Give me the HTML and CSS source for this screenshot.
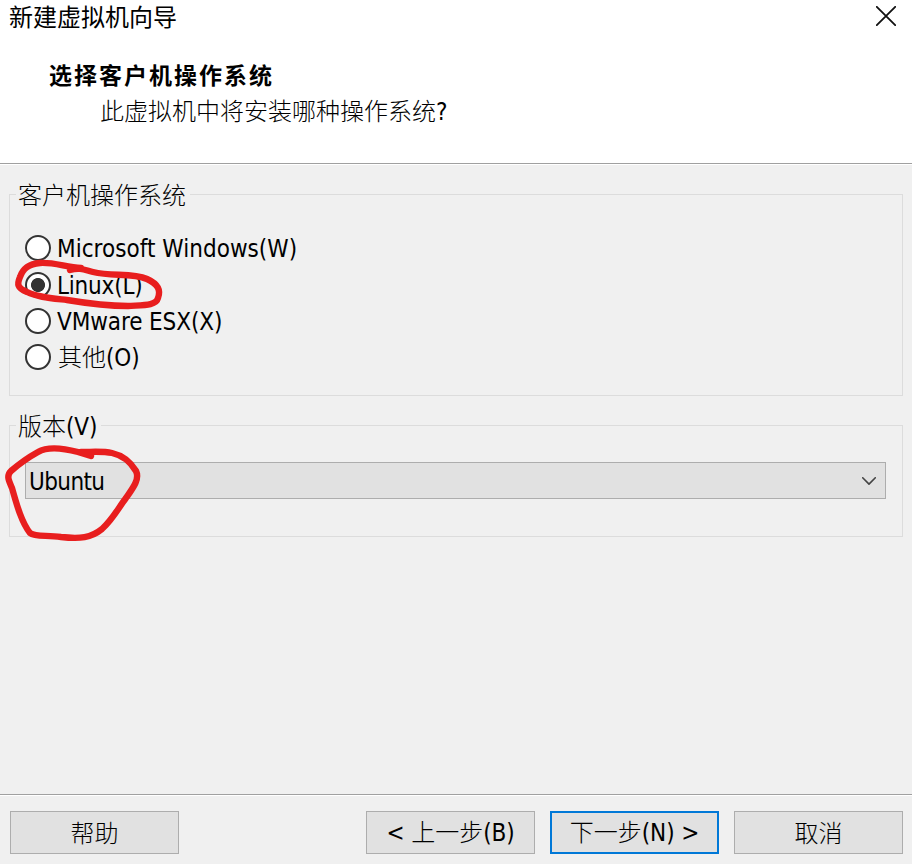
FILE: index.html
```html
<!DOCTYPE html>
<html lang="zh-CN">
<head>
<meta charset="utf-8">
<title>新建虚拟机向导</title>
<link rel="stylesheet" href="styles.css">
</head>
<body>
<div class="window">
  <header class="header">
    <div class="titlebar">
      <span>新建虚拟机向导</span>
      <svg class="close" width="20" height="20" viewBox="0 0 20 20"><path d="M.8 .8 19.2 19.2M19.2 .8 .8 19.2"/></svg>
    </div>
    <h1>选择客户机操作系统</h1>
    <p class="subtitle">此虚拟机中将安装哪种操作系统<span class="latin">?</span></p>
  </header>
  <main class="content">
    <section class="group group-os">
      <h2 class="legend">客户机操作系统</h2>
      <label class="option"><i class="radio"></i><span class="latin windows">Microsoft Windows(W)</span></label>
      <label class="option"><i class="radio selected"></i><span class="latin linux">Linux(L)</span></label>
      <label class="option"><i class="radio"></i><span class="latin esx">VMware ESX(X)</span></label>
      <label class="option"><i class="radio"></i><span class="other">其他<span class="latin">(O)</span></span></label>
    </section>
    <section class="group group-version">
      <h2 class="legend">版本<span class="latin">(V)</span></h2>
      <div class="select">
        <span class="latin ubuntu">Ubuntu</span>
        <svg width="14" height="8" viewBox="0 0 14 8"><path d="M.7 .8 7 7.1 13.3 .8"/></svg>
      </div>
    </section>
  </main>
  <footer class="footer">
    <button class="help">帮助</button>
    <button><span class="latin">&lt;&nbsp;</span>上一步<span class="latin">(B)</span></button>
    <button class="primary">下一步<span class="latin">(N)&nbsp;&gt;</span></button>
    <button>取消</button>
  </footer>
  <svg class="marks" width="912" height="864" viewBox="0 0 912 864">
    <path d="M70 270C80 267 85 270 93 272C112 277 132 272 147 279C158 284 161 290 158 298C156 306 143 305 128 306C105 306 85 303 67 300C50 298 37 297 27 292C17 288 17 284 20 277C23 268 29 264 40 263C53 262 66 267 81 268"/>
    <path d="M91 456 78 452C63 448 48 446 38 452C29 457 19 464 11 471C6 476 9 481 12 488C17 506 22 523 30 533C35 537 46 535 61 537C80 539 91 538 102 529C113 519 119 507 126 498C133 488 140 479 136 471C130 461 121 455 112 453C103 451 93 452 81 452"/>
  </svg>
</div>
</body>
</html>
```
FILE: styles.css
```css
* { box-sizing: border-box; }
body {
  margin: 0;
  font: 300 24px/36px "Noto Sans CJK SC", sans-serif;
  color: #000;
}
.window {
  position: relative;
  width: 912px;
  height: 864px;
  display: flex;
  flex-direction: column;
  overflow: hidden;
  background: #f0f0f0;
}
.latin {
  font-family: "DejaVu Sans Condensed", "DejaVu Sans", sans-serif;
  font-weight: 400;
  font-stretch: condensed;
  letter-spacing: -0.1px;
}
.header {
  height: 165px;
  background: #fff;
  border-bottom: 1px solid #fff;
  box-shadow: inset 0 -1px #a0a0a0;
}
.titlebar {
  height: 32px;
  padding: 0 16px 0 9px;
  display: flex;
  align-items: center;
  justify-content: space-between;
  font-weight: 400;
}
svg { fill: none; stroke-linecap: round; stroke-linejoin: round; }
.close { stroke: #111; stroke-width: 1.8; }
h1 {
  margin: 24px 0 0 49px;
  font: 700 23px/36px "Noto Sans CJK SC", sans-serif;
  letter-spacing: 2px;
}
.subtitle { margin: 0 0 0 100px; }
.content { flex: 1; padding: 29px 9px 0; }
.group { border: 1px solid #dcdcdc; }
.group-os { height: 202px; padding-left: 15px; }
.group-version { height: 112px; margin-top: 29px; padding: 0 16px 0 15px; }
.legend {
  width: max-content;
  height: 36px;
  margin: -19px 0 0 -9px;
  padding: 0 4px 0 2px;
  background: #f0f0f0;
  font-size: 24px;
  font-weight: 300;
}
.group-os .legend { margin-bottom: 18px; }
.option { display: flex; align-items: center; gap: 6px; height: 36.4px; }
.option > .latin { padding-top: 2px; }
.windows { letter-spacing: 0.03px; }
.linux { letter-spacing: -0.2px; }
.other { margin-left: 1px; }
.radio {
  width: 26px;
  height: 26px;
  border: 2px solid #333;
  border-radius: 50%;
  background: #fff;
}
.selected { background: radial-gradient(circle, #333 6.6px, #fff 7.4px); }
.select {
  height: 37px;
  margin-top: 19px;
  padding: 0 9px 0 3px;
  border: 1px solid #adadad;
  background: #e1e1e1;
  display: flex;
  align-items: center;
  justify-content: space-between;
}
.ubuntu { padding-top: 2px; letter-spacing: -0.6px; }
.select svg { stroke: #444; stroke-width: 1.6; }
.footer {
  height: 70px;
  padding: 16px 9px 0 10px;
  border-top: 1px solid #a0a0a0;
  box-shadow: inset 0 1px #fff;
  display: flex;
  gap: 15px;
}
button {
  width: 169px;
  height: 43px;
  padding: 0 0 2px;
  border: 1px solid #adadad;
  background: #e1e1e1;
  font: inherit;
  color: inherit;
  white-space: nowrap;
}
.help { margin-right: auto; }
.primary { border: 2px solid #0078d7; }
.marks { position: absolute; top: 0; left: 0; stroke: #e81e1e; stroke-width: 6.4; pointer-events: none; }
```
